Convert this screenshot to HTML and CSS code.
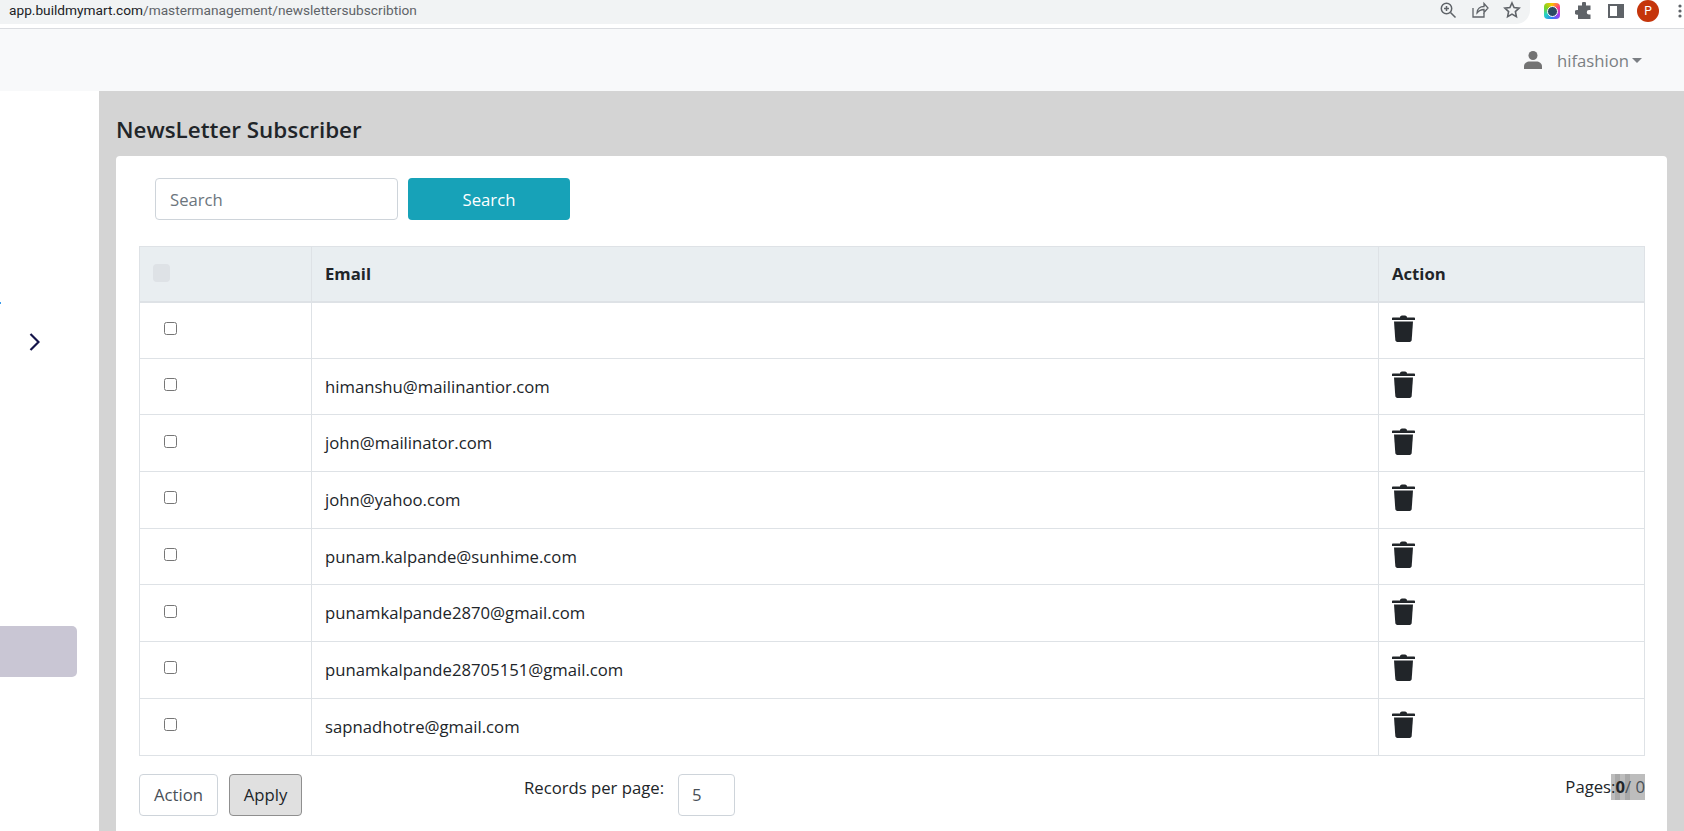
FILE: index.html
```html
<!DOCTYPE html>
<html lang="en">
<head>
    <meta charset="UTF-8">
    <title>NewsLetter Subscriber</title>
    <link rel="stylesheet" href="styles.css">
</head>
<body>
    <!-- Shared trash icon -->
    <svg class="icon-defs" width="0" height="0">
        <symbol id="trash" viewBox="0 0 23 27">
            <path d="M8 2.500C8 1 9 .5 11.500 .5S15 1 15 2.500h7c.6 0 1 .4 1 1V5H0V3.500c0-.6.4-1 1-1z"/>
            <path d="M2 6.500h19l-1.300 18.600c-.1 1.100-.9 1.900-2 1.900H5.300c-1.100 0-1.900-.8-2-1.900z"/>
        </symbol>
    </svg>

    <!-- Browser toolbar -->
    <div class="browser-bar">
        <div class="address-bar">
            <div class="url"><span class="url-host">app.buildmymart.com</span>/mastermanagement/newslettersubscribtion</div>
            <div class="address-icons">
                <svg width="18" height="18" viewBox="0 0 18 18" fill="none" stroke="#5f6368" stroke-width="1.5"><circle cx="7.5" cy="7.5" r="5.2"/><path d="M11.5 11.5l5 5M5 7.5h5M7.5 5v5"/></svg>
                <svg width="18" height="18" viewBox="0 0 18 18" fill="none" stroke="#5f6368" stroke-width="1.3"><path d="M2 7v9h11v-4"/><path d="M6 12c0-4 3-6.500 7-6.500V2.500l4 4.500-4 4.500V8.500c-3 0-5 1-7 3.500z"/></svg>
                <svg width="18" height="18" viewBox="0 0 18 18" fill="none" stroke="#5f6368" stroke-width="1.6"><path d="M9 2l2.100 4.600 5 .6-3.700 3.400 1 5L9 13.100 4.600 15.600l1-5L1.900 7.200l5-.6z"/></svg>
            </div>
        </div>
        <div class="browser-icons">
            <div class="ext-ring"><div class="ext-core"></div></div>
            <svg width="18" height="18" viewBox="0 0 18 18" fill="#5f6368"><path d="M7 1.500a2 2 0 0 1 4 0V3.500h4.500V8h-1.500a2.200 2.200 0 0 0 0 4.500h1.500v4.500H3V12.700H2a2.400 2.400 0 0 1 0-4.800h1V3.500h4z"/></svg>
            <svg width="16" height="14" viewBox="0 0 16 14"><rect x="1" y="1" width="14" height="12" fill="none" stroke="#5f6368" stroke-width="2"/><rect x="9" y="1" width="6" height="12" fill="#5f6368"/></svg>
            <div class="avatar">P</div>
            <svg class="dots" width="4" height="14" viewBox="0 0 4 14" fill="#5f6368"><circle cx="2" cy="2" r="1.600"/><circle cx="2" cy="7" r="1.600"/><circle cx="2" cy="12" r="1.600"/></svg>
        </div>
    </div>

    <!-- Navbar -->
    <nav class="navbar">
        <svg class="user-icon" width="18" height="18" viewBox="0 0 18 18" fill="#737373"><circle cx="9" cy="4.500" r="4.500"/><path d="M0 18v-2.500C0 12 3 10.500 5.500 10.500h7c2.500 0 5.500 1.500 5.500 5V18z"/></svg>
        <span class="user-name">hifashion</span>
        <span class="caret"></span>
    </nav>

    <div class="layout">
        <aside class="sidebar">
            <div class="side-dot"></div>
            <svg class="side-arrow" width="11" height="18" viewBox="0 0 11 18" fill="none" stroke="#14144a" stroke-width="2.200"><path d="M1.500 1l8 8-8 8"/></svg>
            <div class="side-item"></div>
        </aside>

        <main class="content">
            <h1 class="page-title">NewsLetter Subscriber</h1>

            <div class="card">
                <div class="search-row">
                    <input class="search-input" type="text" placeholder="Search">
                    <button class="search-btn">Search</button>
                </div>

                <table class="sub-table">
                    <thead>
                        <tr>
                            <th class="col-check"><span class="check-disabled"></span></th>
                            <th class="col-email">Email</th>
                            <th class="col-action">Action</th>
                        </tr>
                    </thead>
                    <tbody>
                        <tr>
                            <td class="col-check"><input type="checkbox"></td>
                            <td></td>
                            <td><svg class="trash"><use href="#trash"/></svg></td>
                        </tr>
                        <tr>
                            <td class="col-check"><input type="checkbox"></td>
                            <td>himanshu@mailinantior.com</td>
                            <td><svg class="trash"><use href="#trash"/></svg></td>
                        </tr>
                        <tr>
                            <td class="col-check"><input type="checkbox"></td>
                            <td>john@mailinator.com</td>
                            <td><svg class="trash"><use href="#trash"/></svg></td>
                        </tr>
                        <tr>
                            <td class="col-check"><input type="checkbox"></td>
                            <td>john@yahoo.com</td>
                            <td><svg class="trash"><use href="#trash"/></svg></td>
                        </tr>
                        <tr>
                            <td class="col-check"><input type="checkbox"></td>
                            <td>punam.kalpande@sunhime.com</td>
                            <td><svg class="trash"><use href="#trash"/></svg></td>
                        </tr>
                        <tr>
                            <td class="col-check"><input type="checkbox"></td>
                            <td>punamkalpande2870@gmail.com</td>
                            <td><svg class="trash"><use href="#trash"/></svg></td>
                        </tr>
                        <tr>
                            <td class="col-check"><input type="checkbox"></td>
                            <td>punamkalpande28705151@gmail.com</td>
                            <td><svg class="trash"><use href="#trash"/></svg></td>
                        </tr>
                        <tr>
                            <td class="col-check"><input type="checkbox"></td>
                            <td>sapnadhotre@gmail.com</td>
                            <td><svg class="trash"><use href="#trash"/></svg></td>
                        </tr>
                    </tbody>
                </table>

                <div class="table-footer">
                    <div class="action-box">Action</div>
                    <button class="apply-btn">Apply</button>
                    <div class="records">
                        <span class="records-label">Records per page:</span>
                        <div class="records-box">5</div>
                    </div>
                    <div class="pages">Pages<span class="pages-mark"><span class="pages-colon">:</span><b>0</b>/ 0</span></div>
                </div>
            </div>
        </main>
    </div>
</body>
</html>
```

FILE: styles.css
```css
/* ======= Page ======= */
html, body {
    height: 831px;
    overflow: hidden;
}

body {
    margin: 0;
    font-family: "Open Sans", "Noto Sans", sans-serif;
    font-size: 16.7px;
    color: #212529;
    background: #fff;
    display: flex;
    flex-direction: column;
}

.icon-defs {
    position: absolute;
}

/* Browser toolbar */
.browser-bar {
    height: 28px;
    display: flex;
    align-items: flex-start;
    background: #fff;
    border-bottom: 1px solid #dadce0;
    flex-shrink: 0;
}

.address-bar {
    width: 1530px;
    height: 24px;
    background: #f1f3f4;
    border-bottom-right-radius: 14px;
    display: flex;
    justify-content: space-between;
    align-items: center;
    padding: 0 9px 4px;
    box-sizing: border-box;
}

.url {
    font-family: Roboto, sans-serif;
    font-size: 13.7px;
    color: #5f6368;
}

.url-host {
    color: #202124;
}

.address-icons {
    display: flex;
    gap: 14px;
}

.browser-icons {
    display: flex;
    align-items: center;
    gap: 15px;
    height: 22px;
    padding-left: 14px;
}

.ext-ring {
    width: 16px;
    height: 16px;
    border-radius: 4px;
    background: conic-gradient(#ffc400, #ff3d7f, #a23cf0, #2f7df6, #22d3c5, #7ed321, #ffc400);
    display: flex;
    align-items: center;
    justify-content: center;
}

.ext-core {
    width: 9px;
    height: 9px;
    border-radius: 50%;
    background: #2c4a63;
    border: 1.5px solid #fff;
}

.avatar {
    width: 22px;
    height: 22px;
    margin-left: -2px;
    border-radius: 50%;
    background: #c5350b;
    color: #fff;
    font-family: Roboto, sans-serif;
    font-size: 12px;
    line-height: 22px;
    text-align: center;
}

.dots {
    margin-left: 4px;
}

/* Navbar */
.navbar {
    height: 62px;
    background: #f8f9fa;
    display: flex;
    align-items: center;
    justify-content: flex-end;
    padding-right: 42px;
    flex-shrink: 0;
}

.user-icon {
    margin-right: 15px;
}

.user-name {
    color: #7b7f83;
}

.caret {
    margin-left: 3px;
    border-top: 5px solid #7b7f83;
    border-left: 5px solid transparent;
    border-right: 5px solid transparent;
}

/* Layout */
.layout {
    flex: 1;
    display: flex;
    min-height: 0;
}

.sidebar {
    width: 99px;
    background: #fff;
    flex-shrink: 0;
    padding-top: 211px;
    box-sizing: border-box;
}

.side-dot {
    width: 1px;
    height: 2px;
    background: #3b9bea;
}

.side-arrow {
    display: block;
    margin: 29px 0 0 29px;
}

.side-item {
    width: 77px;
    height: 51px;
    margin-top: 275px;
    background: #c9c6d4;
    border-radius: 0 5px 5px 0;
}

.content {
    flex: 1;
    display: flex;
    flex-direction: column;
    background: #d4d4d4;
    padding: 0 17px;
    min-width: 0;
}

.page-title {
    margin: 0;
    height: 65px;
    flex-shrink: 0;
    line-height: 77px;
    font-size: 22.4px;
    font-weight: 600;
}

/* Card */
.card {
    flex: 1;
    min-height: 0;
    background: #fff;
    border-radius: 4px 4px 0 0;
    padding: 22px 23px 0;
}

.search-row {
    display: flex;
    gap: 10px;
    padding-left: 16px;
    margin-bottom: 26px;
}

.search-input {
    width: 243px;
    height: 42px;
    box-sizing: border-box;
    border: 1px solid #ced4da;
    border-radius: 4px;
    padding: 0 14px;
    font: inherit;
    color: #495057;
}

.search-input::placeholder {
    color: #6c757d;
}

.search-btn {
    width: 162px;
    height: 42px;
    border: none;
    border-radius: 4px;
    background: #17a2b8;
    color: #fff;
    font: inherit;
}

/* Table */
.sub-table {
    width: 1506px;
    border-collapse: collapse;
    table-layout: fixed;
}

.sub-table th,
.sub-table td {
    border: 1px solid #dee2e6;
    padding: 0 13px 1px;
    height: 56.7px;
    box-sizing: border-box;
    text-align: left;
    vertical-align: middle;
}

.sub-table th {
    background: #e9eef1;
    border-bottom-width: 2px;
    height: 55px;
    font-weight: 700;
}

.col-check {
    width: 172px;
}

.col-action {
    width: 266px;
}

.sub-table td.col-check {
    padding-left: 24px;
}

.sub-table td.col-check input {
    display: block;
    width: 13px;
    height: 13px;
    margin: 0 0 3px;
}

.check-disabled {
    display: block;
    width: 17px;
    height: 18px;
    background: #dee2e6;
    border-radius: 4px;
}

.trash {
    display: block;
    width: 23px;
    height: 27px;
    margin-bottom: 3px;
    fill: #212529;
}

/* Footer */
.table-footer {
    display: flex;
    align-items: flex-start;
    margin-top: 18px;
    width: 1506px;
}

.action-box {
    width: 79px;
    height: 42px;
    box-sizing: border-box;
    border: 1px solid #ced4da;
    border-radius: 4px;
    line-height: 40px;
    text-align: center;
    color: #495057;
}

.apply-btn {
    width: 73px;
    height: 42px;
    margin-left: 11px;
    border: 1px solid #8f8f8f;
    border-radius: 4px;
    background: #e0e0e0;
    color: #212529;
    font: inherit;
}

.records {
    display: flex;
    margin-left: 222px;
}

.records-label {
    line-height: 28px;
    width: 154px;
}

.records-box {
    width: 57px;
    height: 42px;
    box-sizing: border-box;
    border: 1px solid #ced4da;
    border-radius: 4px;
    padding-left: 13px;
    line-height: 40px;
    color: #495057;
}

.pages {
    margin-left: auto;
    line-height: 26px;
}

.pages-mark {
    display: inline-block;
    color: #495057;
    background: linear-gradient(90deg, #bdbdbd 4px, #a9a9a9 4px, #a9a9a9 9px, #bdbdbd 9px, #bdbdbd 14px, #a9a9a9 14px, #a9a9a9 19px, #bdbdbd 19px);
}

.pages-colon {
    color: #212529;
}

.pages-mark b {
    color: #212529;
}
```
